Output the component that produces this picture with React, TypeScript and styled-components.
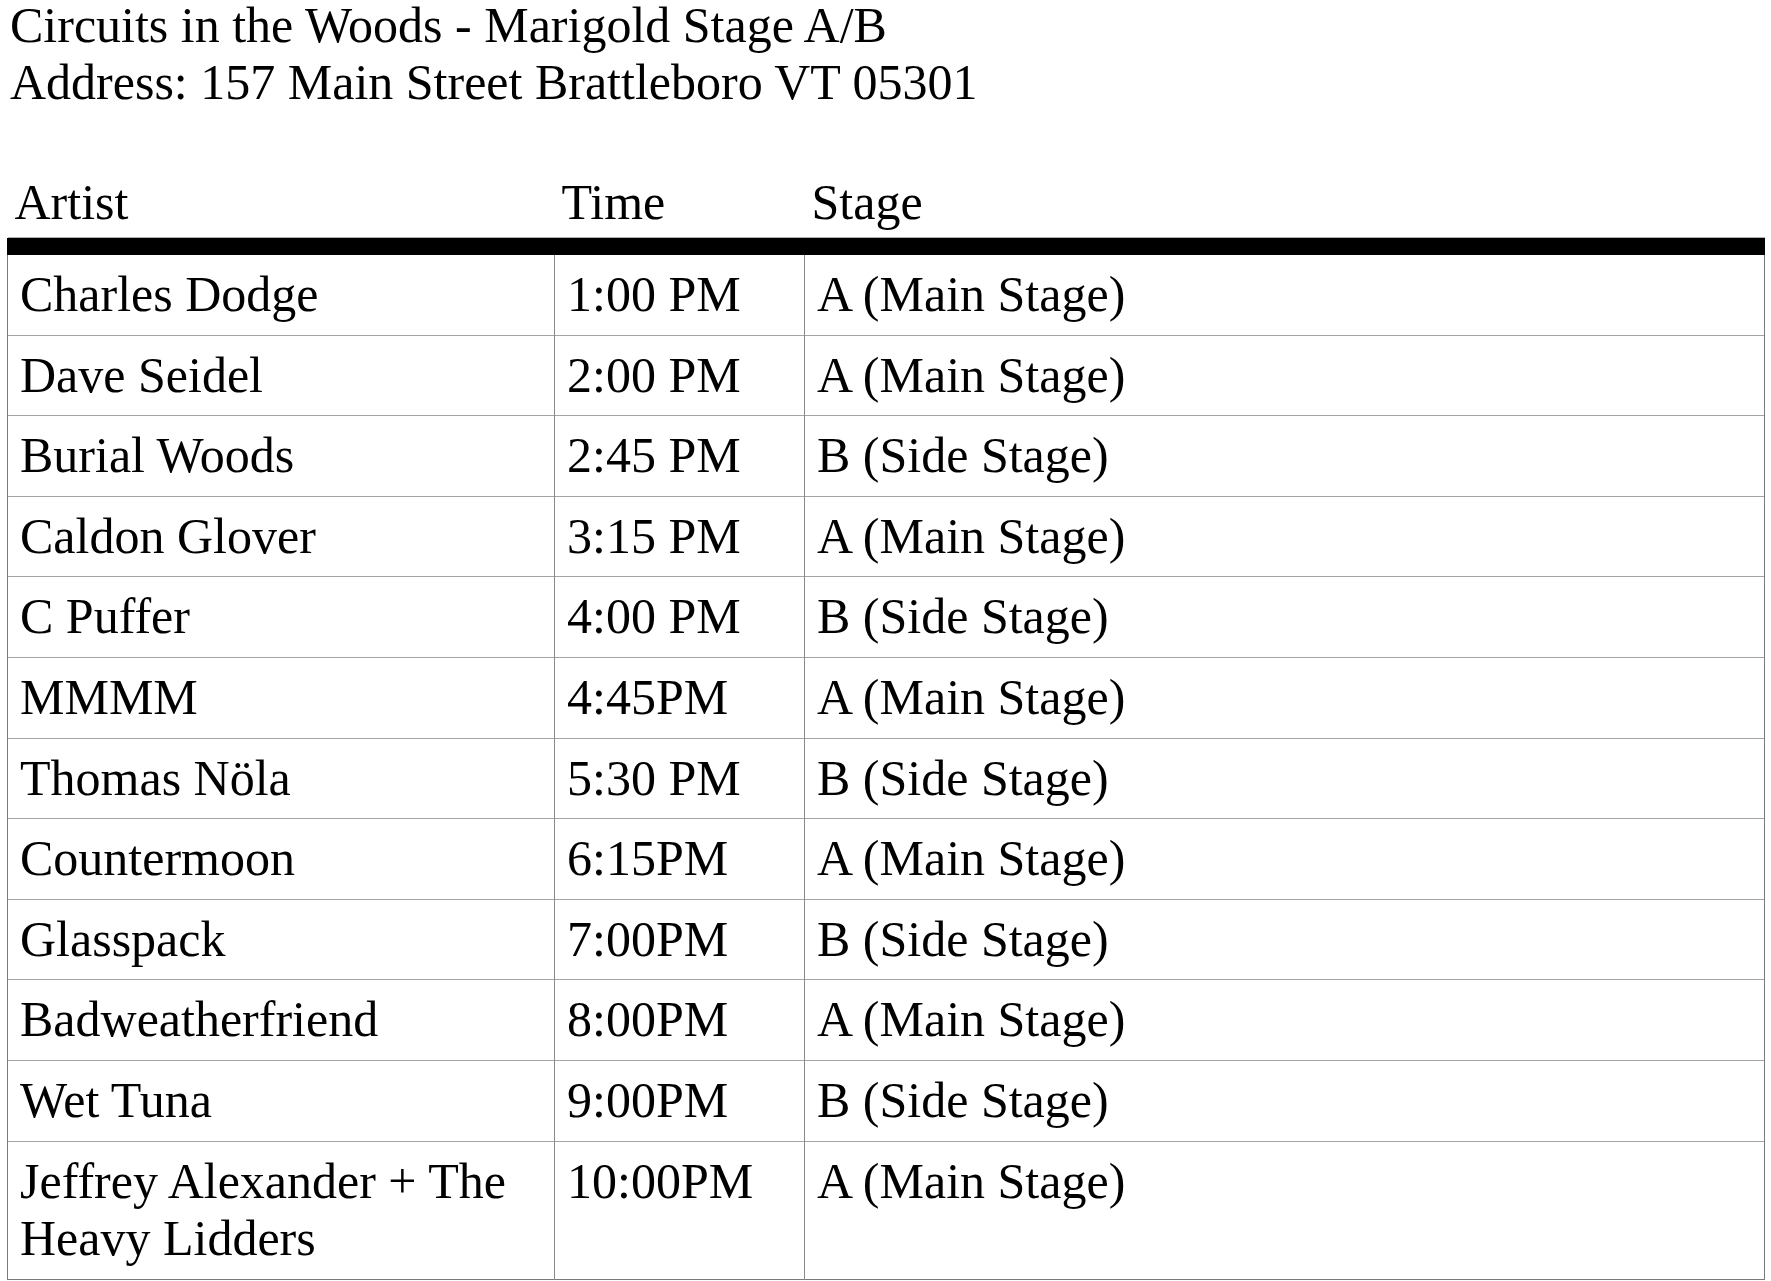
import React from 'react';
import styled, { createGlobalStyle } from 'styled-components';

const GlobalStyle = createGlobalStyle`
  html, body {
    margin: 0;
    padding: 0;
    background: #ffffff;
  }

  body {
    font-family: 'Liberation Serif', 'Times New Roman', Times, serif;
    color: #000000;
  }
`;

const Page = styled.div`
  width: 1771px;
  padding: 0 7px;
  box-sizing: border-box;
`;

const Heading = styled.div`
  margin: -3px 0 0 3px;
  font-size: 50px;
  line-height: 56.7px;
`;

const Schedule = styled.table`
  margin-top: 64px;
  width: 1758px;
  border-collapse: collapse;
  table-layout: fixed;
  font-size: 50px;
  line-height: 57.6px;
`;

const HeadCell = styled.th`
  padding: 0 7px 6px 7px;
  text-align: left;
  font-weight: normal;
  vertical-align: bottom;
  border-bottom: 17px solid #000000;
  box-shadow: inset 0 -18px 0 -17px #b0b0b0;
`;

const Row = styled.tr`
  border-bottom: 1px solid #a4a4a4;

  &:last-child {
    border-bottom: 1px solid #7a7a7a;
  }
`;

const Cell = styled.td<{ $edge?: boolean }>`
  padding: 11px 12px;
  vertical-align: top;
  border-left: 1px solid ${(p) => (p.$edge ? '#7a7a7a' : '#8a8a8a')};

  &:last-child {
    border-right: 1px solid #7a7a7a;
  }
`;

const rows = [
  { artist: 'Charles Dodge', time: '1:00 PM', stage: 'A (Main Stage)' },
  { artist: 'Dave Seidel', time: '2:00 PM', stage: 'A (Main Stage)' },
  { artist: 'Burial Woods', time: '2:45 PM', stage: 'B (Side Stage)' },
  { artist: 'Caldon Glover', time: '3:15 PM', stage: 'A (Main Stage)' },
  { artist: 'C Puffer', time: '4:00 PM', stage: 'B (Side Stage)' },
  { artist: 'MMMM', time: '4:45PM', stage: 'A (Main Stage)' },
  { artist: 'Thomas Nöla', time: '5:30 PM', stage: 'B (Side Stage)' },
  { artist: 'Countermoon', time: '6:15PM', stage: 'A (Main Stage)' },
  { artist: 'Glasspack', time: '7:00PM', stage: 'B (Side Stage)' },
  { artist: 'Badweatherfriend', time: '8:00PM', stage: 'A (Main Stage)' },
  { artist: 'Wet Tuna', time: '9:00PM', stage: 'B (Side Stage)' },
  { artist: 'Jeffrey Alexander + The Heavy Lidders', time: '10:00PM', stage: 'A (Main Stage)' },
];

export default function App() {
  return (
    <Page>
      <GlobalStyle />
      <Heading>
        <div>Circuits in the Woods - Marigold Stage A/B</div>
        <div>Address: 157 Main Street Brattleboro VT 05301</div>
      </Heading>
      <Schedule>
        <colgroup>
          <col style={{ width: 547 }} />
          <col style={{ width: 250 }} />
          <col />
        </colgroup>
        <thead>
          <tr>
            <HeadCell>Artist</HeadCell>
            <HeadCell>Time</HeadCell>
            <HeadCell>Stage</HeadCell>
          </tr>
        </thead>
        <tbody>
          {rows.map((r) => (
            <Row key={r.artist}>
              <Cell $edge>{r.artist}</Cell>
              <Cell>{r.time}</Cell>
              <Cell>{r.stage}</Cell>
            </Row>
          ))}
        </tbody>
      </Schedule>
    </Page>
  );
}
